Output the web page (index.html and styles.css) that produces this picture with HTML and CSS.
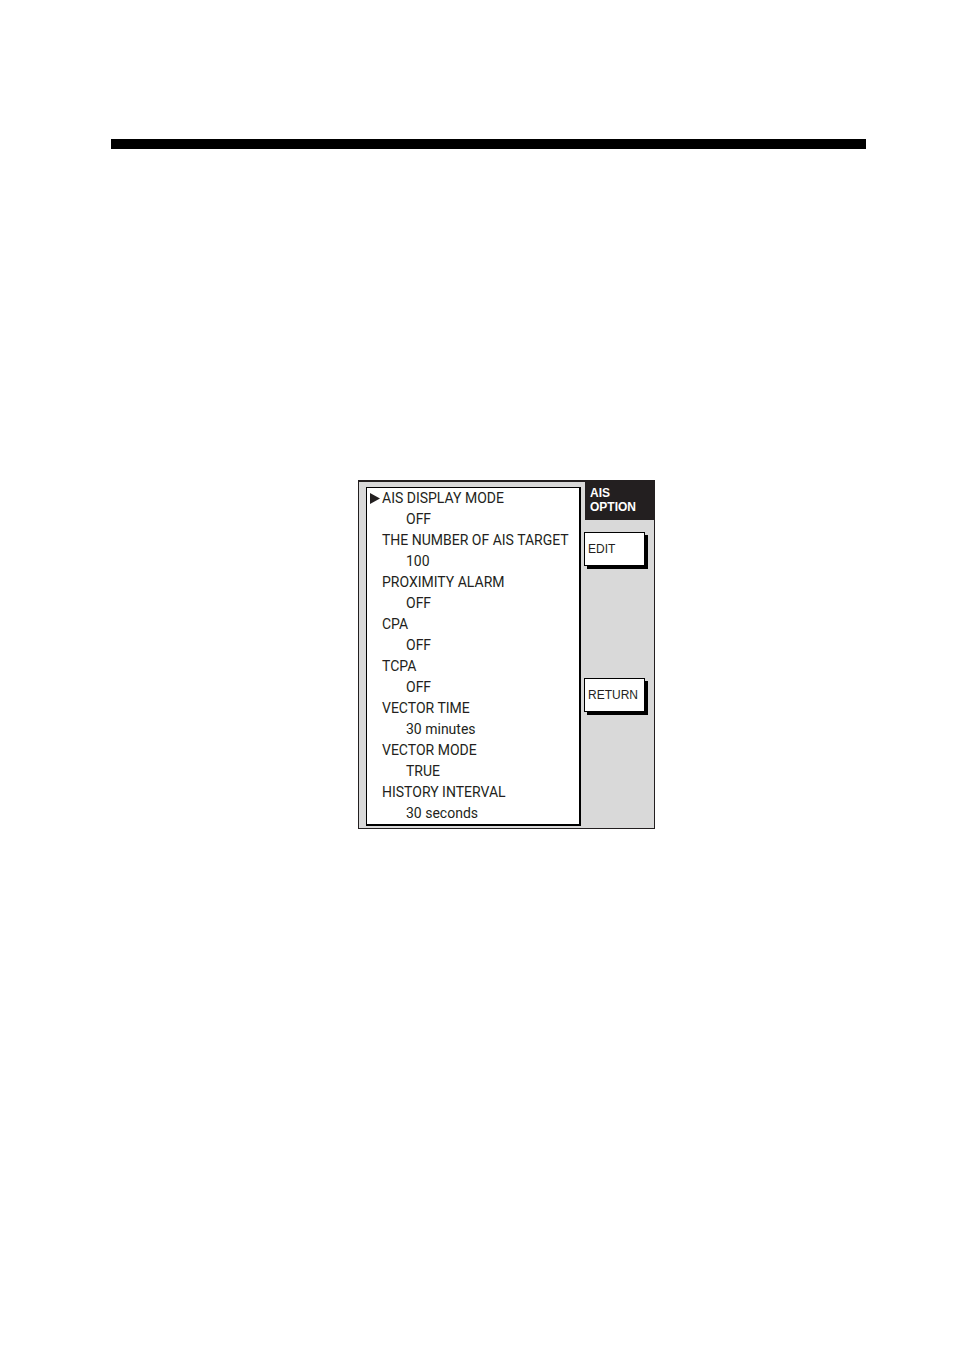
FILE: index.html
```html
<!DOCTYPE html>
<html lang="en">
<head>
    <meta charset="utf-8">
    <title>AIS Option</title>
    <link rel="stylesheet" href="styles.css">
</head>
<body>
    <hr class="rule">

    <main class="display">
        <!-- Option list -->
        <dl class="options">
            <dt class="selected">
                <svg class="cursor" viewBox="0 0 10 11" aria-hidden="true"><path d="M0 0L10 5.5L0 11Z"/></svg>AIS DISPLAY MODE
            </dt>
            <dd>OFF</dd>
            <dt>THE NUMBER OF AIS TARGET</dt>
            <dd>100</dd>
            <dt>PROXIMITY ALARM</dt>
            <dd>OFF</dd>
            <dt>CPA</dt>
            <dd>OFF</dd>
            <dt>TCPA</dt>
            <dd>OFF</dd>
            <dt>VECTOR TIME</dt>
            <dd>30 minutes</dd>
            <dt>VECTOR MODE</dt>
            <dd>TRUE</dd>
            <dt>HISTORY INTERVAL</dt>
            <dd>30 seconds</dd>
        </dl>

        <!-- Soft keys -->
        <div class="softkeys">
            <h1 class="title">AIS<br>OPTION</h1>
            <button type="button" class="key">EDIT</button>
            <button type="button" class="key key-return">RETURN</button>
        </div>
    </main>
</body>
</html>
```

FILE: styles.css
```css
body { margin: 0; padding: 139px 88px 40px 111px; background: #fff; color: #231f20; font-family: "Liberation Sans", Arial, sans-serif; }
.rule { height: 10px; margin: 0; border: 0; background: #000; }

.display { display: flex; box-sizing: border-box; max-width: 297px; margin: 331px 0 0 247px; padding: 0 0 2px 7px; gap: 3px; border: 1px solid #231f20; border-top-width: 2px; background: #d9d9d9; }

.options { flex: 1; margin: 5px 0 0; padding: 0 3px; border: solid #000; border-width: 1px 2px 2px 1px; background: #fff; font-family: Roboto, "Liberation Sans", sans-serif; font-size: 14px; line-height: 21px; white-space: nowrap; }
.options dt { padding-left: 12px; }
.options dt.selected { display: flex; align-items: center; gap: 2px; padding-left: 0; }
.options dd { margin: 0; padding-left: 36px; }
.cursor { width: 10px; height: 11px; fill: #231f20; }

.softkeys { display: flex; flex: none; flex-direction: column; width: 70px; }
.title { margin: 0 0 12px 1px; padding: 4px 5px 6px; background: #231f20; color: #fff; font-size: 12px; line-height: 14px; }
.key { width: 61px; height: 34px; padding: 0 3px; border: 1px solid #000; border-radius: 0; background: #fff; box-shadow: 3px 3px 0 #000; color: #231f20; font-family: inherit; font-size: 12px; text-align: left; cursor: pointer; }
.key-return { margin-top: 112px; }
```
